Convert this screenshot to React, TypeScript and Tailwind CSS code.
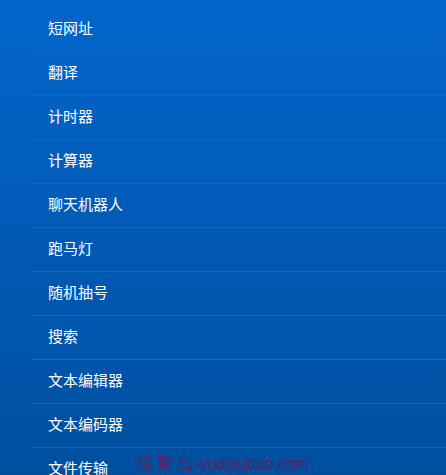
import React from "react";

const items = [
  "短网址",
  "翻译",
  "计时器",
  "计算器",
  "聊天机器人",
  "跑马灯",
  "随机抽号",
  "搜索",
  "文本编辑器",
  "文本编码器",
  "文件传输",
];

export default function App() {
  return (
    <div
      className="relative h-[475px] w-[446px] overflow-hidden bg-gradient-to-b from-[#0365cc] to-[#004f9f]"
      style={{ fontFamily: '"Noto Sans CJK SC", "Noto Sans", sans-serif' }}
    >
      <ul className="pt-[8px] pl-[32px]">
        {items.map((t) => (
          <li
            key={t}
            className="flex h-[44px] items-center border-b border-[#1866bb] pb-[3px] pl-[16px] text-[15px] font-normal text-white"
          >
            {t}
          </li>
        ))}
      </ul>
      <div
        className="absolute left-[137px] top-[454px] flex items-center text-[16px] leading-[20px] text-[#6a1d55] blur-[0.3px]"
        style={{ fontFamily: '"Liberation Sans", "Noto Sans CJK SC", sans-serif' }}
      >
        <span className="tracking-[4px]">缘聚岛</span>
        <span className="-ml-[3px]">-yuanjudao.com</span>
      </div>
    </div>
  );
}
